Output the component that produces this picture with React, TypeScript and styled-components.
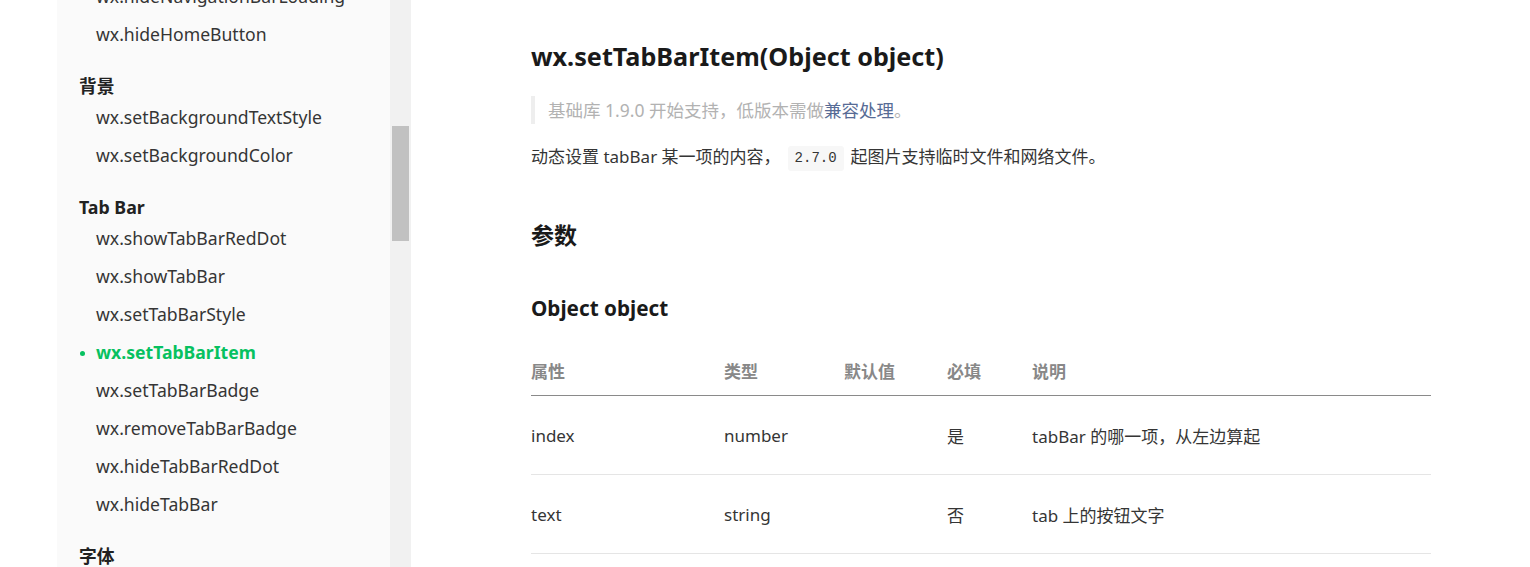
import React from "react";
import styled, { createGlobalStyle } from "styled-components";

const GlobalStyle = createGlobalStyle`
  html, body {
    margin: 0;
    padding: 0;
    background: #ffffff;
  }
  body {
    font-family: "Noto Sans", "Noto Sans CJK SC", sans-serif;
    color: #353535;
  }
`;

interface NavGroup {
  title?: string;
  items: string[];
}

const groups: NavGroup[] = [
  { items: ["wx.hideNavigationBarLoading", "wx.hideHomeButton"] },
  { title: "背景", items: ["wx.setBackgroundTextStyle", "wx.setBackgroundColor"] },
  {
    title: "Tab Bar",
    items: [
      "wx.showTabBarRedDot",
      "wx.showTabBar",
      "wx.setTabBarStyle",
      "wx.setTabBarItem",
      "wx.setTabBarBadge",
      "wx.removeTabBarBadge",
      "wx.hideTabBarRedDot",
      "wx.hideTabBar",
    ],
  },
  { title: "字体", items: [] },
];

const ACTIVE = "wx.setTabBarItem";

const rows = [
  { name: "index", type: "number", def: "", req: "是", desc: "tabBar 的哪一项，从左边算起" },
  { name: "text", type: "string", def: "", req: "否", desc: "tab 上的按钮文字" },
];

export default function App() {
  return (
    <>
      <GlobalStyle />
      <Page>
        <Gutter />
        <Sidebar>
          <NavList>
            {groups.map((g, gi) => (
              <Group key={gi}>
                {g.title && <GroupTitle>{g.title}</GroupTitle>}
                {g.items.map((it) => (
                  <NavItem key={it} active={it === ACTIVE}>
                    {it}
                  </NavItem>
                ))}
              </Group>
            ))}
          </NavList>
        </Sidebar>
        <ScrollTrack>
          <ScrollThumb />
        </ScrollTrack>
        <Main>
          <Article>
            <Title>wx.setTabBarItem(Object object)</Title>
            <Quote>
              基础库 1.9.0 开始支持，低版本需做<QuoteLink>兼容处理</QuoteLink>。
            </Quote>
            <Para>
              动态设置 tabBar 某一项的内容，<Code>2.7.0</Code>起图片支持临时文件和网络文件。
            </Para>
            <H2>参数</H2>
            <H3>Object object</H3>
            <Table>
              <thead>
                <tr>
                  <Th w={193}>属性</Th>
                  <Th w={120}>类型</Th>
                  <Th w={103}>默认值</Th>
                  <Th w={85}>必填</Th>
                  <Th>说明</Th>
                </tr>
              </thead>
              <tbody>
                {rows.map((r) => (
                  <tr key={r.name}>
                    <Td>{r.name}</Td>
                    <Td>{r.type}</Td>
                    <Td>{r.def}</Td>
                    <Td>{r.req}</Td>
                    <Td>{r.desc}</Td>
                  </tr>
                ))}
              </tbody>
            </Table>
          </Article>
        </Main>
      </Page>
    </>
  );
}

const Page = styled.div`
  display: flex;
  width: 1530px;
  height: 567px;
  overflow: hidden;
`;

const Gutter = styled.div`
  width: 57px;
  flex-shrink: 0;
  background: #ffffff;
`;

const Sidebar = styled.nav`
  width: 333px;
  flex-shrink: 0;
  background: #fafafa;
  overflow: hidden;
`;

const NavList = styled.div`
  margin-top: -23px;
  padding-left: 22px;
`;

const Group = styled.div`
  & + & {
    margin-top: 19px;
  }
`;

const GroupTitle = styled.div`
  font-size: 17.8px;
  font-weight: 700;
  line-height: 26px;
  padding-top: 1px;
  margin-bottom: -1px;
  color: #222222;
`;

const NavItem = styled.div<{ active?: boolean }>`
  position: relative;
  padding-left: 17px;
  font-size: 17.6px;
  line-height: 38px;
  white-space: nowrap;
  color: ${(p) => (p.active ? "#07c160" : "#353535")};
  font-weight: ${(p) => (p.active ? 700 : 400)};

  &::before {
    content: "";
    display: ${(p) => (p.active ? "block" : "none")};
    position: absolute;
    left: 1px;
    top: 18px;
    width: 5px;
    height: 5px;
    border-radius: 50%;
    background: #07c160;
  }
`;

const ScrollTrack = styled.div`
  width: 21px;
  flex-shrink: 0;
  background: #f1f1f1;
  padding-top: 126px;
  box-sizing: border-box;
`;

const ScrollThumb = styled.div`
  height: 115px;
  margin: 0 2px;
  background: #c1c1c1;
`;

const Main = styled.main`
  flex: 1;
  padding-left: 120px;
  background: #ffffff;
`;

const Article = styled.article`
  width: 900px;
`;

const Title = styled.h1`
  margin: 38px 0 0;
  font-size: 25.2px;
  line-height: 36px;
  font-weight: 700;
  color: #1a1a1a;
`;

const Quote = styled.blockquote`
  margin: 22px 0 0;
  padding-left: 13px;
  border-left: 4px solid #eeeeee;
  font-size: 17.5px;
  line-height: 28px;
  color: #b2b2b2;
`;

const QuoteLink = styled.a`
  color: #576b95;
  text-decoration: none;
`;

const Para = styled.p`
  margin: 19px 0 0;
  font-size: 17px;
  line-height: 28px;
  color: #353535;
`;

const Code = styled.code`
  display: inline-block;
  margin: 0 7px;
  padding: 0 7px;
  line-height: 25px;
  font-family: "Liberation Mono", "DejaVu Sans Mono", monospace;
  font-size: 14px;
  background: #f7f7f7;
  border-radius: 3px;
  color: #353535;
  vertical-align: 1px;
`;

const H2 = styled.h2`
  margin: 47px 0 0;
  font-size: 23px;
  line-height: 34px;
  font-weight: 700;
  color: #1a1a1a;
`;

const H3 = styled.h3`
  margin: 41px 0 0;
  font-size: 20.7px;
  line-height: 30px;
  font-weight: 700;
  color: #1a1a1a;
`;

const Table = styled.table`
  margin-top: 22px;
  width: 900px;
  border-collapse: collapse;
  table-layout: fixed;
  font-size: 17px;
`;

const Th = styled.th<{ w?: number }>`
  width: ${(p) => (p.w ? `${p.w}px` : "auto")};
  height: 50px;
  padding: 0;
  text-align: left;
  font-weight: 700;
  color: #888888;
  border-bottom: 1px solid #8a8a8a;
`;

const Td = styled.td`
  height: 78px;
  padding: 0;
  color: #353535;
  border-bottom: 1px solid #e5e5e5;
`;
